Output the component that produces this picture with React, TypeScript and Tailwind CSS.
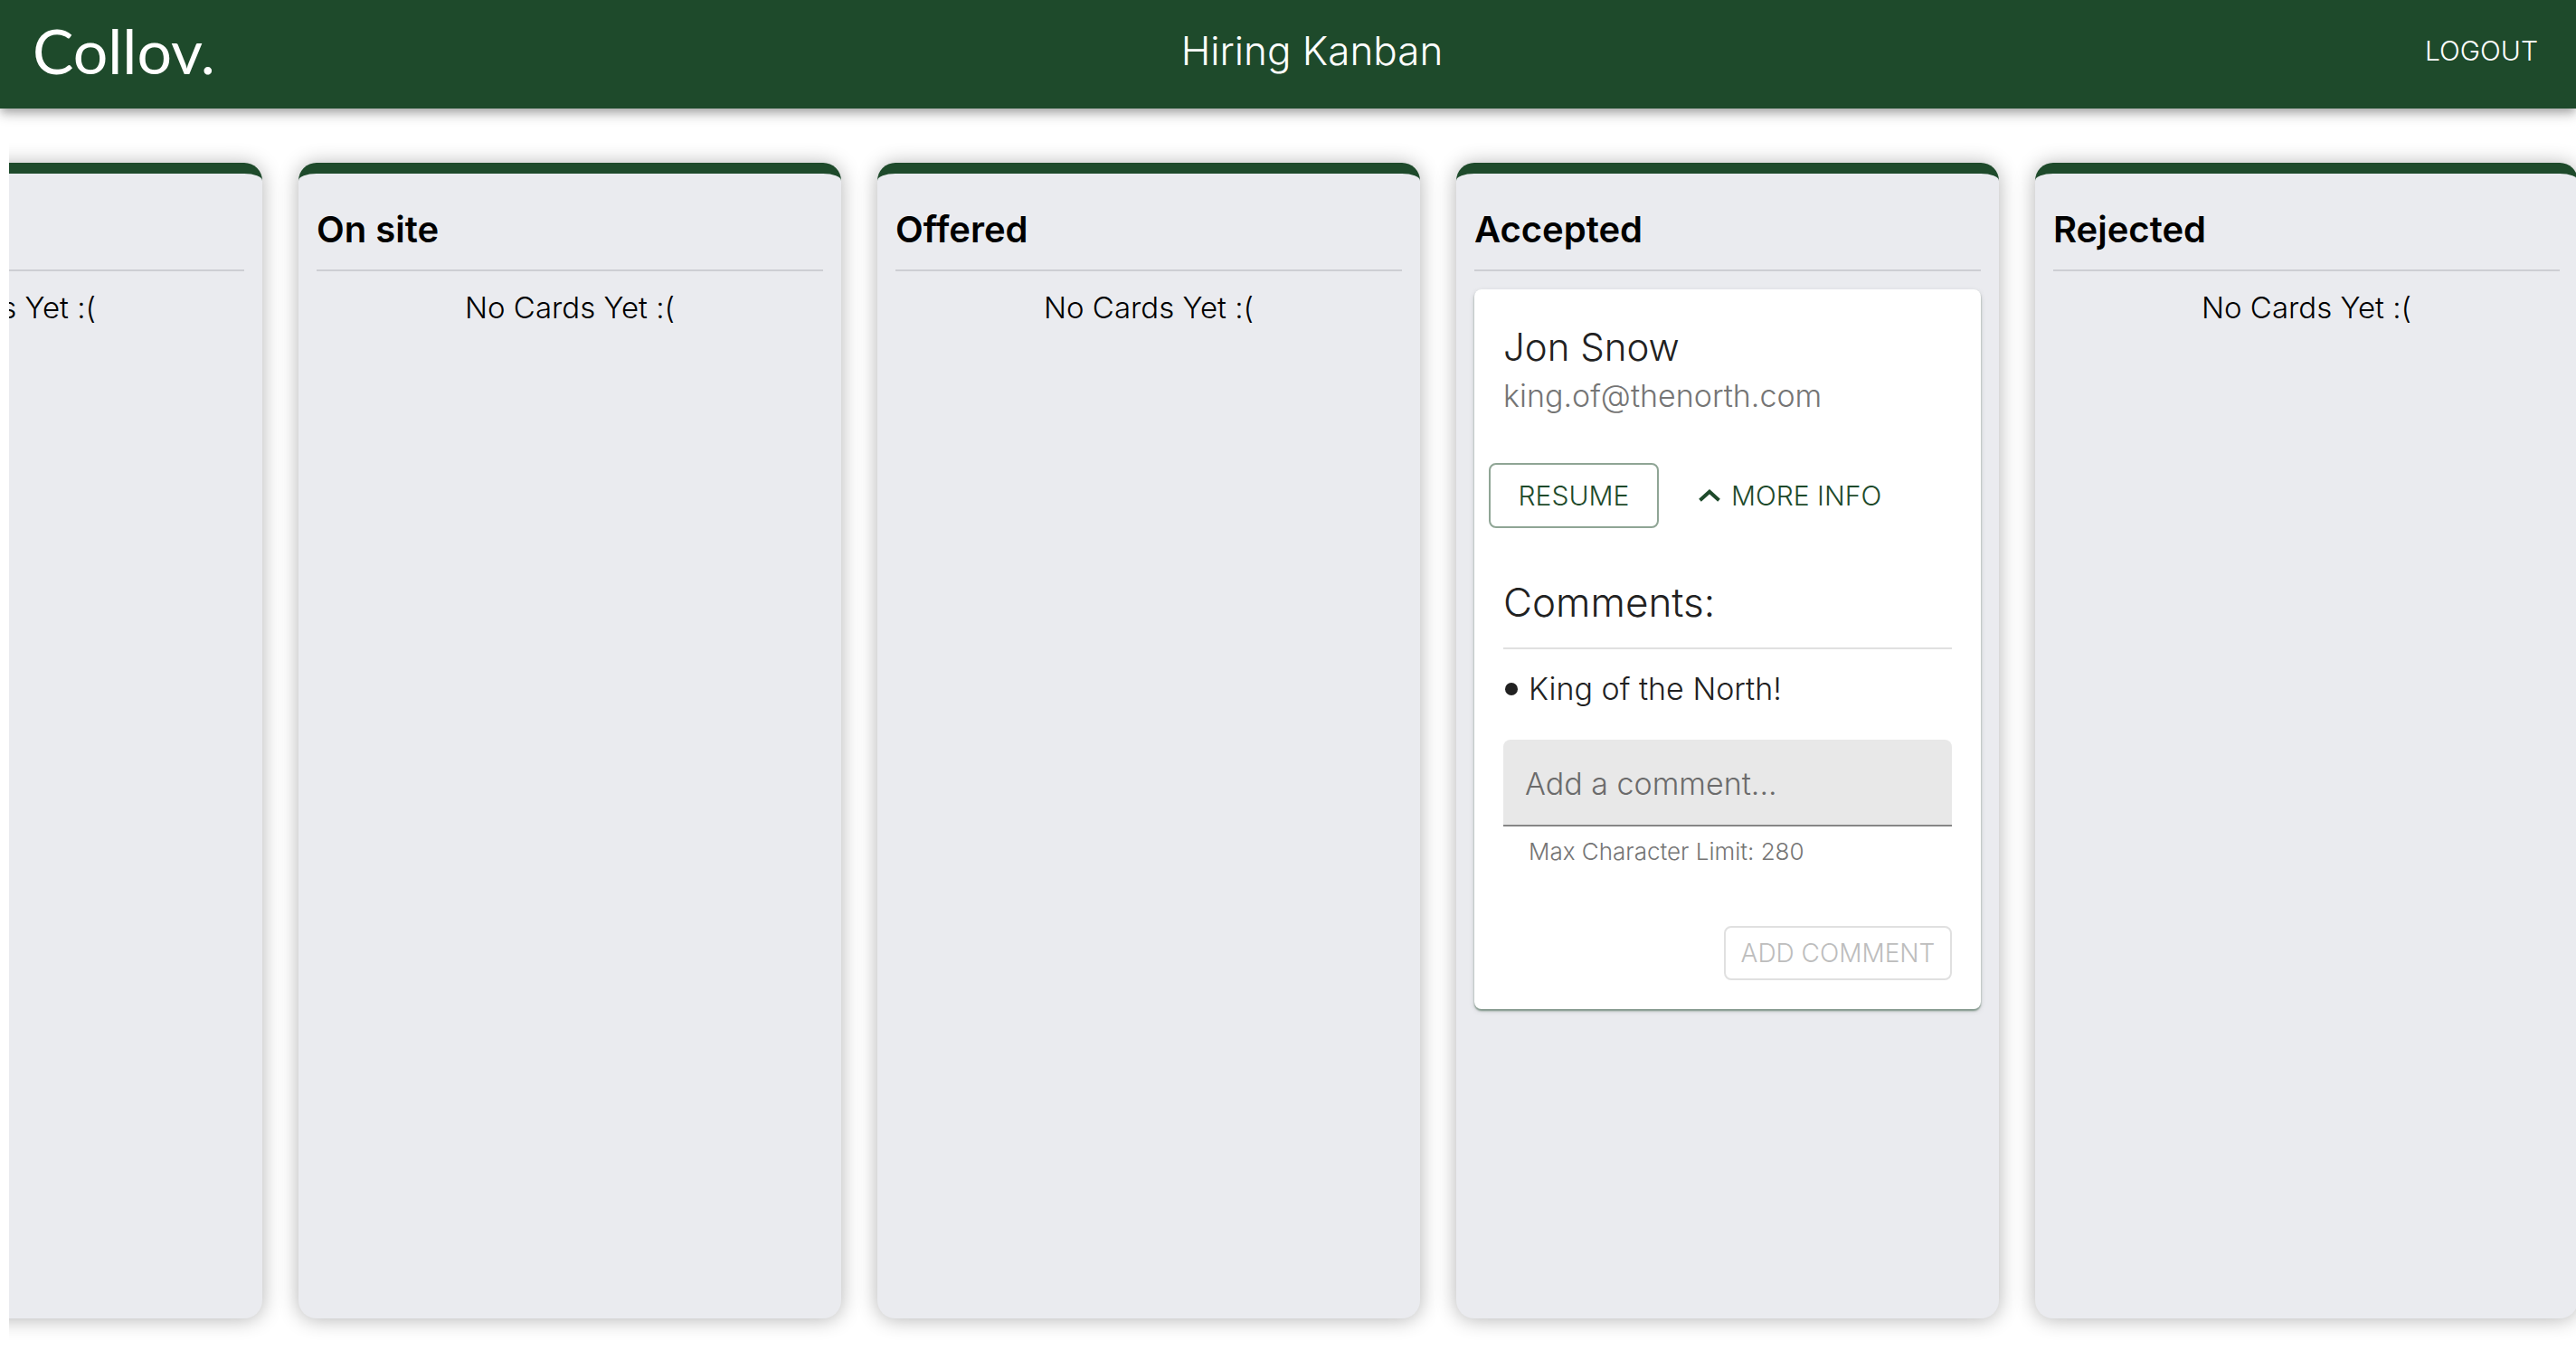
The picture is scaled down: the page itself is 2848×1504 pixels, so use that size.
import { useState, type FormEvent, type ReactNode } from 'react';

type Column = { id: string; title?: string; content?: ReactNode };

function Header() {
  return (
    <header className="relative z-10 flex h-30 items-center justify-between bg-[#1e4a2b] pr-5.5 pb-2 pl-9 text-white shadow-[0_4px_8px_-2px_rgba(0,0,0,0.2),0_8px_10px_0_rgba(0,0,0,0.14),0_2px_20px_0_rgba(0,0,0,0.12)]">
      <a href="#" className="w-51 text-[68px] leading-none font-['Lato',sans-serif]">
        Collov.
      </a>
      <h1 className="text-[44px] leading-12 font-light">Hiring Kanban</h1>
      <button type="button" className="rounded-lg px-5 py-3 text-[30px] leading-12 font-light">
        LOGOUT
      </button>
    </header>
  );
}

function ChevronUp() {
  return (
    <svg viewBox="0 0 24 14" className="h-3.5 w-6" fill="none" stroke="currentColor" strokeWidth="4" aria-hidden="true">
      <path d="M1.5 12.3 12 2.8 22.5 12.3" />
    </svg>
  );
}

function CandidateCard() {
  const [open, setOpen] = useState(true);
  const [draft, setDraft] = useState('');
  const [comments, setComments] = useState(['King of the North!']);

  const submit = (event: FormEvent) => {
    event.preventDefault();
    setComments([...comments, draft]);
    setDraft('');
  };

  return (
    <article className="mt-5 rounded-lg bg-white text-[#212121] shadow-[0_2px_2px_0_rgba(30,74,43,0.5),0_2px_6px_0_rgba(0,0,0,0.12)]">
      <div className="px-8 pt-8">
        <h3 className="text-[42px] leading-16 font-light">Jon Snow</h3>
        <p className="text-[34px] leading-11 font-light text-[#757575]">king.of@thenorth.com</p>
      </div>
      <div className="mt-13 flex items-center gap-7 px-4">
        <button
          type="button"
          className="h-18 w-47 rounded-lg border-2 border-[#8fa595] text-[30px] text-[#1e4a2b] font-light"
        >
          RESUME
        </button>
        <button
          type="button"
          aria-expanded={open}
          onClick={() => setOpen(!open)}
          className="flex h-18 items-center gap-3 px-4 text-[30px] text-[#1e4a2b] font-light"
        >
          <ChevronUp />
          MORE INFO
        </button>
      </div>
      {open && (
        <form onSubmit={submit} className="flex flex-col px-8 pt-13 pb-8">
          <h4 className="border-b-2 border-[#e0e0e0] pb-5 text-[44px] leading-15 font-light">Comments:</h4>
          <ul className="pt-5 text-[34px] leading-12 font-light">
            {comments.map((comment) => (
              <li key={comment} className="flex items-center gap-3 pl-0.5">
                <span className="size-3.5 rounded-full bg-[#212121]" />
                {comment}
              </li>
            ))}
          </ul>
          <input
            type="text"
            aria-label="Add a comment"
            aria-describedby="comment-limit"
            placeholder="Add a comment..."
            maxLength={280}
            value={draft}
            onChange={(event) => setDraft(event.target.value)}
            className="mt-8 h-24 rounded-t-lg border-b-2 border-[#868686] bg-[#e8e8e8] px-6 pt-0.5 text-[34px] font-light placeholder:text-[#6b6b6b]"
          />
          <p id="comment-limit" className="mt-2 pl-7 text-[26px] leading-10 font-light text-[#757575]">
            Max Character Limit: 280
          </p>
          <button
            type="submit"
            disabled={draft === ''}
            className="mt-15.5 h-15 w-63 self-end rounded-lg border-2 border-[#1e4a2b] text-[28px] font-light whitespace-nowrap text-[#1e4a2b] disabled:border-[#e0e0e0] disabled:text-[#bdbdbd]"
          >
            ADD COMMENT
          </button>
        </form>
      )}
    </article>
  );
}

const columns: Column[] = [
  { id: 'previous' },
  { id: 'on-site', title: 'On site' },
  { id: 'offered', title: 'Offered' },
  { id: 'accepted', title: 'Accepted', content: <CandidateCard /> },
  { id: 'rejected', title: 'Rejected' },
];

function BoardColumn({ title, content }: Column) {
  return (
    <section className="flex w-150 shrink-0 flex-col rounded-[20px] border-t-12 border-[#1e4a2b] bg-[#eaebef] px-5 pb-5 shadow-[0_1px_22px_0_rgba(0,0,0,0.3)]">
      <div className="h-27 border-b-2 border-[#cdced3] pt-8">
        {title && <h2 className="text-[40px] leading-15 font-semibold">{title}</h2>}
      </div>
      {content ?? <p className="pt-4 text-center text-[33px] leading-12 font-light">No Cards Yet :(</p>}
    </section>
  );
}

export default function App() {
  return (
    <div className="flex min-h-screen flex-col bg-white text-black font-['Inter',sans-serif]">
      <Header />
      <main className="ml-2.5 flex grow overflow-hidden pt-15 pb-11.5">
        <div className="-mr-0.5 flex min-w-0 grow justify-end gap-10">
          {columns.map((column) => (
            <BoardColumn key={column.id} {...column} />
          ))}
        </div>
      </main>
    </div>
  );
}
